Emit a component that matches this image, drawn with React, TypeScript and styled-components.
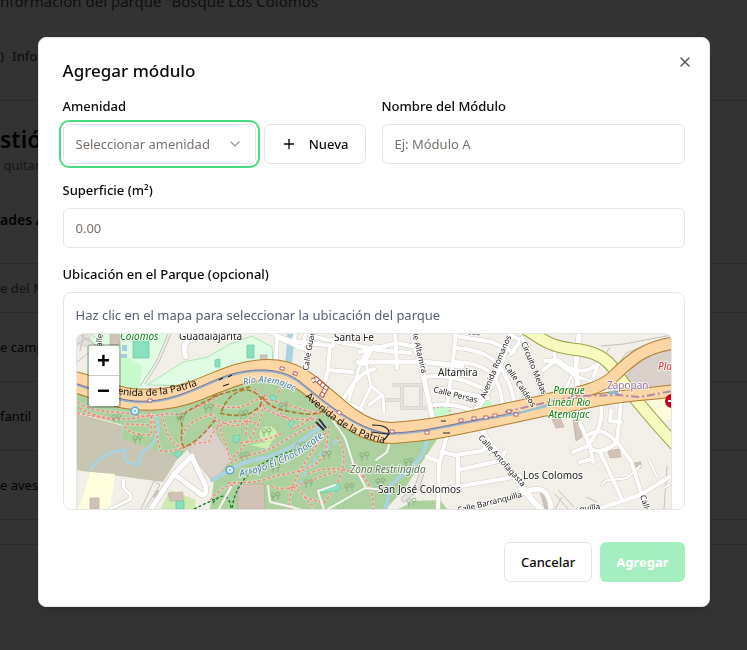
import React from "react";
import styled, { createGlobalStyle } from "styled-components";
import { ChevronDown, Plus, X } from "lucide-react";

const GlobalStyle = createGlobalStyle`
  *, *::before, *::after { box-sizing: border-box; }
  body {
    margin: 0;
    background: #fff;
    color: #0c0a09;
    font-family: "Noto Sans", "Open Sans", sans-serif;
    font-size: 13px;
    line-height: 20px;
  }
  button, input, select { font: inherit; color: inherit; }
`;

/* ---------- Page behind the dialog ---------- */

const Page = styled.main`
  height: 100vh;
  overflow: hidden;
  white-space: nowrap;
`;

const Line = styled.div<{ $h: number; $border?: boolean; $tone?: string; $size?: number; $weight?: number }>`
  display: flex;
  align-items: center;
  gap: 8px;
  height: ${(p) => p.$h}px;
  border-bottom: ${(p) => (p.$border ? "1px solid #d6d3d1" : "0")};
  color: ${(p) => p.$tone ?? "#0c0a09"};
  font-size: ${(p) => p.$size ?? 13}px;
  font-weight: ${(p) => p.$weight ?? 400};
`;

const Overlay = styled.div`
  position: fixed;
  inset: 0;
  display: flex;
  align-items: center;
  justify-content: center;
  padding: 0 16px 6px;
  background: rgba(0, 0, 0, 0.8);
`;

/* ---------- Dialog ---------- */

const Dialog = styled.form`
  position: relative;
  display: flex;
  flex-direction: column;
  gap: 16px;
  width: 100%;
  max-width: 672px;
  padding: 24px;
  border: 1px solid #e5e5e5;
  border-radius: 8px;
  background: #fff;
  box-shadow: 0 10px 15px -3px rgba(0, 0, 0, 0.1), 0 4px 6px -4px rgba(0, 0, 0, 0.1);
`;

const Title = styled.h2`
  margin: 0;
  font-size: 17px;
  font-weight: 500;
  line-height: 18px;
`;

const CloseButton = styled.button`
  position: absolute;
  top: 16px;
  right: 16px;
  display: flex;
  padding: 0;
  border: 0;
  background: none;
  opacity: 0.7;
  cursor: pointer;
`;

const Columns = styled.div`
  display: grid;
  grid-template-columns: 1fr 1fr;
  gap: 16px;
`;

const Field = styled.div`
  display: flex;
  flex-direction: column;
  gap: 8px;
  min-width: 0;
`;

const Label = styled.label`
  font-weight: 500;
`;

const Input = styled.input`
  width: 100%;
  height: 40px;
  padding: 8px 12px;
  border: 1px solid #e5e5e5;
  border-radius: 6px;
  background: #fff;
  outline: none;
  &::placeholder { color: #78716c; opacity: 1; }
`;

const Inline = styled.div`
  display: flex;
  gap: 8px;
`;

const SelectBox = styled.div`
  display: grid;
  flex: 1;
  min-width: 0;
  align-items: center;
  > * { grid-area: 1 / 1; }
  > svg { justify-self: end; margin-right: 13px; opacity: 0.4; pointer-events: none; }
`;

const Select = styled.select`
  appearance: none;
  width: 100%;
  height: 40px;
  padding: 8px 12px;
  border: 1px solid #e5e5e5;
  border-radius: 6px;
  background: #fff;
  color: #78716c;
  outline: none;
  box-shadow: 0 0 0 2px #fff, 0 0 0 4px #4ade80;
`;

const Button = styled.button<{ $primary?: boolean }>`
  display: inline-flex;
  align-items: center;
  justify-content: center;
  gap: 12px;
  height: 40px;
  padding: 8px 16px;
  border: ${(p) => (p.$primary ? "0" : "1px solid #e5e5e5")};
  border-radius: 6px;
  background: ${(p) => (p.$primary ? "#4ade80" : "#fff")};
  color: ${(p) => (p.$primary ? "#fff" : "#0c0a09")};
  font-weight: ${(p) => (p.$primary ? 700 : 500)};
  cursor: pointer;
  &:disabled { opacity: 0.5; cursor: default; }
`;

const MapPanel = styled.div`
  display: flex;
  flex-direction: column;
  gap: 8px;
  padding: 12px 12px 0;
  overflow: hidden;
  border: 1px solid #e5e5e5;
  border-radius: 8px;
`;

const Hint = styled.p`
  margin: 0;
  color: #566173;
`;

const MapView = styled.div`
  position: relative;
  height: 176px;
  overflow: hidden;
  border: 1px solid #e5e5e5;
  border-bottom: 0;
  border-radius: 8px 8px 0 0;
  background: #f2efe9;
  > svg { display: block; width: 100%; height: 100%; }
`;

const ZoomControl = styled.div`
  position: absolute;
  top: 10px;
  left: 10px;
  border: 2px solid rgba(0, 0, 0, 0.2);
  border-radius: 4px;
  background-clip: padding-box;
`;

const ZoomButton = styled.button`
  display: flex;
  align-items: center;
  justify-content: center;
  width: 30px;
  height: 30px;
  padding: 0;
  border: 0;
  background: #fff;
  color: #000;
  font: bold 22px/30px "Liberation Sans", sans-serif;
  cursor: pointer;
  &:first-child { border-bottom: 1px solid #ccc; border-radius: 2px 2px 0 0; }
  &:last-child { border-radius: 0 0 2px 2px; }
`;

const Footer = styled.div`
  display: flex;
  justify-content: flex-end;
  gap: 8px;
  padding-top: 16px;
`;

/* ---------- Map data ---------- */

const trunkMain =
  "M70 381 C90 385 104 394 125 398 C150 402 174 399 195 391 C222 381 240 370 268 370 C296 370 310 385 330 402 C350 420 368 433 392 433 C430 431 460 424 510 413 L556 403";
const trunkSouth = "M545 410 C570 406 584 402 604 399 C630 395 650 394 680 390";
const trunkNorth = "M545 400 C580 393 602 388 614 376 C632 358 646 346 680 342";
const yellowRoad = "M520 325 C540 338 548 346 572 349 C595 351 607 358 616 372 C626 388 645 412 680 450";

const streets: [string, number][] = [
  ["M270 333 L277 334 L276 360 M277 337 L306 350", 4],
  ["M276 336 L292 341 L333 346 L336 333 M296 333 C290 345 302 354 304 341 L306 333", 4],
  ["M310 336 L378 350 L410 353 M330 346 L328 370 L352 372", 4],
  ["M328 370 L325 382 M342 402 C347 392 357 373 374 369 M345 402 L362 410", 4],
  ["M378 346 C366 348 361 360 357 375 L348 402", 3],
  ["M358 362 L423 362 L462 366", 5],
  ["M395 333 L397 368 M360 352 L397 343 L416 347 M374 346 L363 364", 4],
  ["M366 363 L371 386 L383 396 L384 413 M371 386 L361 407 M381 396 L369 405", 3],
  ["M412 333 L422 370 L433 420", 5],
  ["M456 333 L452 370 L447 405", 4],
  ["M455 336 L492 342 L514 352 M456 348 C484 350 505 358 514 400", 4],
  ["M424 377 C444 374 463 378 488 391 M453 362 C482 362 500 372 502 402", 4],
  ["M434 405 C448 403 459 405 474 411 M438 388 L488 398", 4],
  ["M512 333 L495 378 L474 414 L486 438 L531 499 L541 509", 6],
  ["M522 338 L511 354 M512 336 L526 342 L544 402", 4],
  ["M447 435 L439 465 L438 509 M441 452 L455 455 L482 451 L491 443 M458 455 L458 489 M458 470 L499 461 L505 452", 4],
  ["M438 490 L520 476 M427 457 L438 461", 4],
  ["M520 494 C540 485 549 488 551 509 M520 488 L530 496", 5],
  ["M579 334 L576 366 L578 390", 5],
  ["M554 344 L555 361 L577 377 M598 364 L592 382 M545 361 L558 360 C573 374 589 374 599 362 M555 361 L543 370", 4],
  ["M571 377 L566 388 M578 377 L605 386", 3],
  ["M601 403 C603 420 599 432 587 446 M580 423 L590 446 L593 462 M573 452 L588 446 C595 454 606 452 617 442", 4],
  ["M621 402 L617 442 M588 435 C602 427 606 433 617 442 M611 410 L610 421 L621 422", 4],
  ["M617 442 L631 461 L642 495 L650 511 M600 452 L621 497", 4],
  ["M580 462 L592 459", 4],
  ["M598 509 L640 495 L674 474", 4],
];

const detailStreets = "M602 485 C605 477 613 481 627 478 L640 466 M649 460 L657 477 M664 488 L670 484";

const paths = [
  "M78 402 C95 415 119 410 136 415 C154 419 163 411 179 415 C189 409 209 405 226 390",
  "M79 408 C103 421 126 421 151 415 L151 435 C134 434 125 433 126 424 L149 425",
  "M148 412 C157 423 157 443 161 451 C178 453 187 443 209 442 C213 426 227 417 257 423",
  "M162 414 C165 429 168 443 183 448 C177 435 188 420 211 415",
  "M212 405 C230 408 238 409 249 404 C264 390 291 410 322 414",
  "M215 420 C225 436 229 458 231 463 C249 452 262 456 282 442 C301 430 310 427 322 424",
  "M265 394 C262 423 254 438 232 458 M255 389 C261 401 283 412 296 428",
  "M210 413 C238 440 252 417 261 406 C279 417 291 421 318 419",
  "M240 443 C256 441 270 440 282 433 M292 429 C308 423 311 416 318 410",
  "M228 483 C238 482 250 484 267 479 C287 471 315 474 326 452 L329 426",
  "M326 433 C303 462 288 488 289 509 M288 489 C298 483 301 495 315 508",
  "M337 437 C347 450 349 472 324 503 L303 497 M308 474 C322 467 345 466 363 477",
  "M210 500 C219 490 229 483 234 486 M271 486 C287 495 312 478 337 471",
  "M354 463 C367 481 374 488 373 509 M77 413 L114 420",
  "M278 393 L284 383 M246 435 L247 421",
];

const brownPaths = [
  "M218 395 C199 405 190 408 180 418 C185 428 178 438 184 447 C199 441 208 429 215 420",
  "M220 413 C232 417 250 416 255 410 C270 402 256 389 244 390 C230 393 224 404 221 413",
  "M262 396 C268 406 276 410 299 413 C309 415 315 415 323 411 M212 397 C229 391 242 389 250 387",
];

const greens = [
  "M213 503 C220 493 230 493 231 509",
  "M232 508 C237 477 258 461 298 449 M194 509 L215 499",
];

const buildings = [
  "M110 333 L120 333 L120 345 L110 345 Z",
  "M153 496 L157 490 L163 494 L158 502 Z",
  "M168 493 L183 492 L183 501 L170 501 Z",
  "M238 484 L264 484 L265 509 L238 509 Z",
  "M260 355 L267 355 L267 361 L261 361 Z",
  "M552 419 L560 417 L564 427 L556 428 Z",
  "M573 420 L579 419 L582 437 L576 441 Z",
  "M608 451 L619 449 L621 457 L610 458 Z",
  "M634 463 L641 462 L641 468 L634 467 Z",
  "M540 492 L548 492 L551 509 L545 509 Z",
  "M90 498 L99 498 L99 509 L90 509 Z",
];

const pitches = [
  "M133 341 L149 340 L149 358 L133 358 Z",
  "M215 360 L220 359 L220 367 L215 367 Z",
  "M247 345 L254 345 L254 358 L247 358 Z",
  "M271 395 L277 397 L274 401 L269 398 Z",
  "M291 420 L295 422 L291 428 L288 425 Z",
  "M233 436 L240 435 L239 442 L234 443 Z",
  "M174 453 L180 450 L182 454 L177 458 Z",
  "M176 501 L184 501 L184 509 L176 509 Z",
  "M320 489 L333 485 A4 4 0 1 1 335 491 L321 493 Z",
];

const trees: [number, number][] = [
  [116, 417], [137, 438], [180, 416], [208, 407], [243, 413], [283, 405], [266, 431], [244, 455], [326, 454],
  [300, 445], [275, 467], [364, 455], [308, 482], [349, 486], [408, 461], [380, 481], [275, 495], [411, 501],
];

const crossings: [number, number, number][] = [
  [282, 369, 10], [295, 374, 20], [339, 413, 40], [392, 432, 0], [427, 433, 0], [461, 421, 0], [474, 419, 0],
  [486, 418, 0], [495, 416, 0], [509, 412, 0], [516, 415, 0], [575, 397, 0], [150, 401, 5],
];

type MapLabel = { t: string; x: number; y: number; r?: number; s?: number; c?: string; i?: boolean; m?: boolean };

const labels: MapLabel[] = [
  { t: "Colomos", x: 120, y: 340, s: 10, c: "#0e8517", i: true },
  { t: "Guadalajarita", x: 179, y: 340, s: 10 },
  { t: "Santa Fe", x: 334, y: 341, s: 10 },
  { t: "Altamira", x: 438, y: 376, s: 10 },
  { t: "San José Colomos", x: 378, y: 493, s: 10 },
  { t: "Los Colomos", x: 523, y: 479, s: 10 },
  { t: "Zona Restringida", x: 350, y: 473, s: 10, c: "#5f7658", i: true },
  { t: "Parque", x: 569, y: 394, s: 10, c: "#0e8517", i: true, m: true },
  { t: "Lineal Río", x: 569, y: 406, s: 10, c: "#0e8517", i: true, m: true },
  { t: "Atemajac", x: 569, y: 418, s: 10, c: "#0e8517", i: true, m: true },
  { t: "Zapopan", x: 607, y: 389, s: 10, c: "#9a75a5" },
  { t: "Plaza", x: 658, y: 370, s: 10, c: "#d0342c", i: true },
  { t: "Calle Guadalupe", x: 308, y: 371, r: -80, s: 8 },
  { t: "Calle Altamira", x: 410, y: 323, r: 77, s: 8 },
  { t: "Calle Persas", x: 433, y: 392, r: 14, s: 8 },
  { t: "Calle Los Persas", x: 420, y: 330, r: 5, s: 8 },
  { t: "Avenida Romanos", x: 485, y: 399, r: -67, s: 8 },
  { t: "Calle Caldeos", x: 504, y: 366, r: 56, s: 8 },
  { t: "Circuito Medas", x: 521, y: 343, r: 68, s: 8 },
  { t: "Calle Antofagasta", x: 478, y: 438, r: 48, s: 8 },
  { t: "Calle Barranquilla", x: 458, y: 513, r: -14, s: 8 },
  { t: "Calle", x: 640, y: 496, r: 72, s: 8 },
  { t: "quilla", x: 580, y: 512, r: -8, s: 8 },
  { t: "Calle", x: 101, y: 352, r: -85, s: 8 },
];

const wedge = "M192 456 L174 474 L151 509 M174 474 L202 495 Q208 494 205 485 L192 457";
const culDeSac = "M203 335 C187 339 181 343 186 357";

function ParkMap() {
  return (
    <svg viewBox="77 334 594 175" preserveAspectRatio="xMidYMin slice" role="img" aria-label="Mapa del parque">
      <defs>
        <path id="patria-west" d="M106 391 C140 401 172 396 215 379" />
        <path id="patria-east" d="M305 397 C333 422 350 437 392 445" />
        <path id="rio" d="M244 385 C262 379 284 383 304 397" />
        <path id="arroyo" d="M240 477 C270 470 300 459 328 433" />
      </defs>
      <rect x="70" y="330" width="610" height="182" fill="#f2efe9" />
      <path d="M76 333 H104 L108 350 L76 346 Z" fill="#e3e0dc" />
      <path d="M92 333 H168 L144 392 L110 390 L88 352 Z" fill="#dffce2" />
      <path d="M88 345 L122 354 L143 366 L138 392 L88 386 Z" fill="#c8facc" />
      <path d="M147 385 L183 362 L208 357 L230 344 L252 336 L272 347 L273 362 L240 365 L200 386 Z" fill="#dffce2" stroke="#a7e6b1" />
      <path d="M480 410 L488 398 L495 409 Z" fill="#c8facc" />
      <path d="M433 408 L449 406 L451 417 L434 420 Z" fill="#c8facc" stroke="#e87b6f" strokeDasharray="2 2" />
      <path
        d="M76 394 L130 405 L200 395 L260 375 L300 382 L370 438 L438 438 L405 488 L386 509 H210 L214 480 L232 458 L211 425 L178 459 L121 439 L123 425 L76 412 Z"
        fill="#add19e"
      />
      <path d="M415 501 L440 500 L448 510 L396 510 Z" fill="#add19e" />
      <path d="M76 413 L123 426 L121 438 L178 458 L163 482 L76 470 Z" fill="#c8c6b2" />
      <path d="M90 472 L115 474 L110 510 L77 510 L84 494 Z" fill="#ffffdf" />
      <path d="M170 490 L196 500 L194 510 H160 Z" fill="#cdebb0" />
      <path d="M188 450 L211 425 L232 459 L213 482 Z" fill="#d9d0c9" stroke="#c8bcb5" />
      <path d="M622 381 L634 367 Q648 352 674 350 V385 L640 390 Z" fill="#d9d0c9" stroke="#c7b8ae" />
      <path d="M634 400 L674 392 V418 L652 424 Z" fill="#fcfbd9" />
      <ellipse cx="268" cy="434" rx="9" ry="8" fill="#cdf0ae" stroke="#e4b29d" strokeDasharray="2 2" />
      <path d="M250 445 L272 441 L268 449 Z" fill="#cdf0ae" />
      {buildings.map((d) => <path key={d} d={d} fill="#d1c3b8" stroke="#b9a99c" strokeWidth="0.6" />)}
      <g fill="none" stroke="#aad3df" strokeLinecap="round" strokeLinejoin="round">
        <path d="M291 333 L289 360" strokeWidth="7" />
        <path d="M155 415 C163 430 156 445 141 453 L139 464 C128 465 121 459 126 450 C112 450 99 457 91 469" strokeWidth="3" />
        <path d="M212 480 C227 473 237 463 258 459 C280 456 302 442 324 424" strokeWidth="4" />
        <path d="M427 438 C425 463 404 471 390 486 L386 508" strokeWidth="4" />
        <path d="M336 441 C320 455 304 465 299 490" strokeWidth="3" strokeDasharray="3 6" />
      </g>
      <g fill="none" stroke="#efe6e0" strokeWidth="3">{paths.map((d) => <path key={d} d={d} opacity="0.4" />)}</g>
      <g fill="none" stroke="#f5857a" strokeWidth="1.4" strokeDasharray="3 2">{paths.map((d) => <path key={d} d={d} />)}</g>
      <g fill="none" stroke="#ae7a2b" strokeWidth="1.6" strokeDasharray="5 2">{brownPaths.map((d) => <path key={d} d={d} />)}</g>
      <g fill="none" stroke="#118027" strokeWidth="1.4" strokeDasharray="3 2">{greens.map((d) => <path key={d} d={d} />)}</g>
      {pitches.map((d) => <path key={d} d={d} fill="#88e0be" stroke="#6fc5a5" strokeWidth="0.7" />)}
      <path d="M122 345 h5 v6 h-5 Z M121 354 h6 v4 h-6 Z" fill="#a3cde0" />
      {trees.map(([x, y]) => (
        <g key={`${x}-${y}`} fill="none" stroke="#7ea978" strokeWidth="0.8">
          <circle cx={x - 2} cy={y} r="2.2" />
          <circle cx={x + 3} cy={y - 1} r="2" />
          <path d={`M${x - 2} ${y} v6 M${x + 3} ${y} v5`} />
        </g>
      ))}
      <g fill="none" strokeLinejoin="round" strokeLinecap="round">
        <path d="M394 385 H421 M402 387 V408 H430 M421 387 V408 M386 400 H400" stroke="#cfcdcb" strokeWidth="4" />
        <path d="M394 385 H421 M402 387 V408 H430 M421 387 V408 M386 400 H400" stroke="#e4e2df" strokeWidth="3" />
      </g>
      <g fill="none" stroke="#c4c0bc" strokeWidth="1">
        <path d="M76 345 L88 338 L104 353 M78 333 L96 346 M84 333 L80 351 M77 362 L92 350 M90 333 L104 345" />
        <path d="M601 346 L624 344 L672 335 M620 362 L626 353 L650 344 L672 339 M622 364 L628 355 L652 347 L672 342" />
        <path d="M168 334 L156 362 L140 386 M171 334 L159 362 L145 384" />
        <path d="M141 509 L154 481 L160 485 L145 509 M555 494 L568 509 M558 490 L574 507 M667 466 L664 509" />
        <path d="M555 509 L562 497 M586 497 L597 502 M672 432 L665 428 M610 347 L604 356" />
      </g>
      <g fill="none" strokeLinejoin="round" strokeLinecap="round">
        <path d="M219 509 L231 487 M268 486 L270 502 L292 507 L302 510 M324 510 L318 491 L335 485 M328 509 L365 488 L384 490 M332 419 L345 438 L353 463 L366 488 M391 437 L387 452 L376 460" stroke="#f6f3f1" strokeWidth="2" />
        <path d={detailStreets} stroke="#cfcac6" strokeWidth="3" />
        {streets.map(([d, w]) => <path key={d} d={d} stroke="#d2cdc9" strokeWidth={w + 1} />)}
        <path d={culDeSac} stroke="#cbc7c3" strokeWidth="6" />
        <path d={wedge} stroke="#cbc7c3" strokeWidth="6" />
        <path d="M124 480 C119 493 137 493 129 500 L110 509" stroke="#cbc7c3" strokeWidth="4" />
        <path d={detailStreets} stroke="#fff" strokeWidth="2" />
        {streets.map(([d, w]) => <path key={d} d={d} stroke="#fff" strokeWidth={w} />)}
        <path d={culDeSac} stroke="#fff" strokeWidth="5" />
        <path d={wedge} stroke="#fff" strokeWidth="5" />
        <path d="M124 480 C119 493 137 493 129 500 L110 509" stroke="#fff" strokeWidth="3" />
        <path d="M404 499 L417 488 L421 475" stroke="#c9c9c9" strokeWidth="6" />
        <path d="M404 499 L417 488 L421 475" stroke="#e7e5e2" strokeWidth="4" />
      </g>
      <g fill="none">
        <path d={yellowRoad} stroke="#9da450" strokeWidth="13" />
        <path d={yellowRoad} stroke="#f7fabf" strokeWidth="11" />
        <path d={trunkMain} stroke="#b07f2e" strokeWidth="22" />
        <path d={trunkSouth} stroke="#b07f2e" strokeWidth="13" />
        <path d={trunkNorth} stroke="#b07f2e" strokeWidth="13" />
        <path d={trunkMain} stroke="#fcd6a4" strokeWidth="20" />
        <path d={trunkSouth} stroke="#fcd6a4" strokeWidth="11" />
        <path d={trunkNorth} stroke="#fcd6a4" strokeWidth="11" />
        <path d="M70 383 C95 389 110 400 135 402 C176 405 206 382 232 375 C258 368 286 369 304 386 C325 403 355 429 386 434 C425 434 447 425 520 413 L548 405" stroke="#96b6cf" strokeWidth="2" />
        <path d="M70 382 C95 388 110 399 135 401 C176 404 206 381 232 374 C258 367 286 368 304 385 C325 402 355 428 386 433 C425 433 447 424 520 412" stroke="#88708c" strokeWidth="1" />
        <path d="M505 416 L548 406" stroke="#9bc2cf" strokeWidth="2" />
        <path d="M505 412 L548 402 L578 396 L618 395 L640 397 L672 391" stroke="#b18aad" strokeWidth="2" strokeDasharray="8 3 2 3" />
        <path d="M606 394 L615 390 L620 394 Z" fill="#86bbd1" />
        <path d="M312 381 L316 379 L326 388 L321 397" stroke="#b65048" strokeWidth="5" />
        <path d="M312 381 L316 379 L326 388 L321 397" stroke="#fff" strokeWidth="3" strokeDasharray="3 1" />
        <path d="M372 425 Q390 425 389 434 L384 440 M371 432 L388 434 M219 380 L223 378 M228 377 L232 375 M223 386 L229 384 M441 421 L446 421 M443 433 L450 433" stroke="#222" strokeWidth="1.2" />
        <path d="M316 422 L324 430 M319 419 L326 428" stroke="#333" strokeWidth="2" />
      </g>
      {crossings.map(([x, y, r]) => (
        <rect key={`${x}-${y}`} x={x - 2} y={y - 2} width="4" height="3" fill="#fff" stroke="#a64c55" strokeWidth="0.8" transform={`rotate(${r} ${x} ${y})`} />
      ))}
      {[[135, 411], [230, 470]].map(([x, y]) => (
        <g key={x} fill="#dff1f7" stroke="#64a8d5" strokeWidth="1.6">
          <circle cx={x} cy={y} r="3.8" />
          <circle cx={x} cy={y} r="1" fill="#64a8d5" stroke="none" />
        </g>
      ))}
      <circle cx="672" cy="401" r="7" fill="#c4001a" />
      <rect x="668" y="400" width="8" height="2" fill="#fff" />
      <g fontFamily="Noto Sans, sans-serif" stroke="rgba(255,255,255,.75)" strokeWidth="2" paintOrder="stroke" strokeLinejoin="round">
        {labels.map((l) => (
          <text
            key={`${l.t}-${l.x}`}
            x={l.x}
            y={l.y}
            fontSize={l.s}
            fill={l.c ?? "#222"}
            fontStyle={l.i ? "italic" : "normal"}
            textAnchor={l.m ? "middle" : "start"}
            transform={l.r ? `rotate(${l.r} ${l.x} ${l.y})` : undefined}
          >
            {l.t}
          </text>
        ))}
        <text fontSize="9" fill="#457fa8" fontStyle="italic"><textPath href="#rio">Río Atemajac</textPath></text>
        <text fontSize="10" fill="#457fa8" fontStyle="italic"><textPath href="#arroyo">Arroyo El Chochocate</textPath></text>
      </g>
      <g fontFamily="Noto Sans, sans-serif" fontSize="10" fill="#111">
        <text><textPath href="#patria-west">Avenida de la Patria</textPath></text>
        <text><textPath href="#patria-east">Avenida de la Patria</textPath></text>
      </g>
    </svg>
  );
}

export default function App() {
  return (
    <>
      <GlobalStyle />
      <Page aria-hidden="true">
        <Line $h={2} $size={15} $tone="#57534e">nformación del parque "Bosque Los Colomos"</Line>
        <Line $h={35} />
        <Line $h={38} $weight={500} $tone="#57534e"><span>)</span><span>Infor</span></Line>
        <Line $h={26} $border />
        <Line $h={12} />
        <Line $h={52} $size={23} $weight={600}>stión</Line>
        <Line $h={0} $tone="#78716c">&nbsp;quitar</Line>
        <Line $h={12} />
        <Line $h={87} $border $size={14} $weight={600}>ades A</Line>
        <Line $h={49} $border $weight={500} $tone="#78716c">e del M</Line>
        <Line $h={69} $border>e camp</Line>
        <Line $h={69} $border>fantil</Line>
        <Line $h={69} $border>e aves</Line>
        <Line $h={25} $border />
      </Page>
      <Overlay>
        <Dialog role="dialog" aria-modal="true" aria-labelledby="dialog-title" onSubmit={(e) => e.preventDefault()}>
          <Title id="dialog-title">Agregar módulo</Title>
          <Columns>
            <Field>
              <Label htmlFor="amenidad">Amenidad</Label>
              <Inline>
                <SelectBox>
                  <Select id="amenidad" defaultValue="">
                    <option value="">Seleccionar amenidad</option>
                  </Select>
                  <ChevronDown size={16} />
                </SelectBox>
                <Button type="button"><Plus size={16} />Nueva</Button>
              </Inline>
            </Field>
            <Field>
              <Label htmlFor="nombre">Nombre del Módulo</Label>
              <Input id="nombre" placeholder="Ej: Módulo A" />
            </Field>
          </Columns>
          <Field>
            <Label htmlFor="superficie">Superficie (m²)</Label>
            <Input id="superficie" inputMode="decimal" placeholder="0.00" />
          </Field>
          <Field role="group" aria-labelledby="ubicacion">
            <Label as="span" id="ubicacion">Ubicación en el Parque (opcional)</Label>
            <MapPanel>
              <Hint>Haz clic en el mapa para seleccionar la ubicación del parque</Hint>
              <MapView>
                <ParkMap />
                <ZoomControl>
                  <ZoomButton type="button" aria-label="Acercar">+</ZoomButton>
                  <ZoomButton type="button" aria-label="Alejar">−</ZoomButton>
                </ZoomControl>
              </MapView>
            </MapPanel>
          </Field>
          <Footer>
            <Button type="button">Cancelar</Button>
            <Button type="submit" $primary disabled>Agregar</Button>
          </Footer>
          <CloseButton type="button" aria-label="Cerrar"><X size={16} /></CloseButton>
        </Dialog>
      </Overlay>
    </>
  );
}
